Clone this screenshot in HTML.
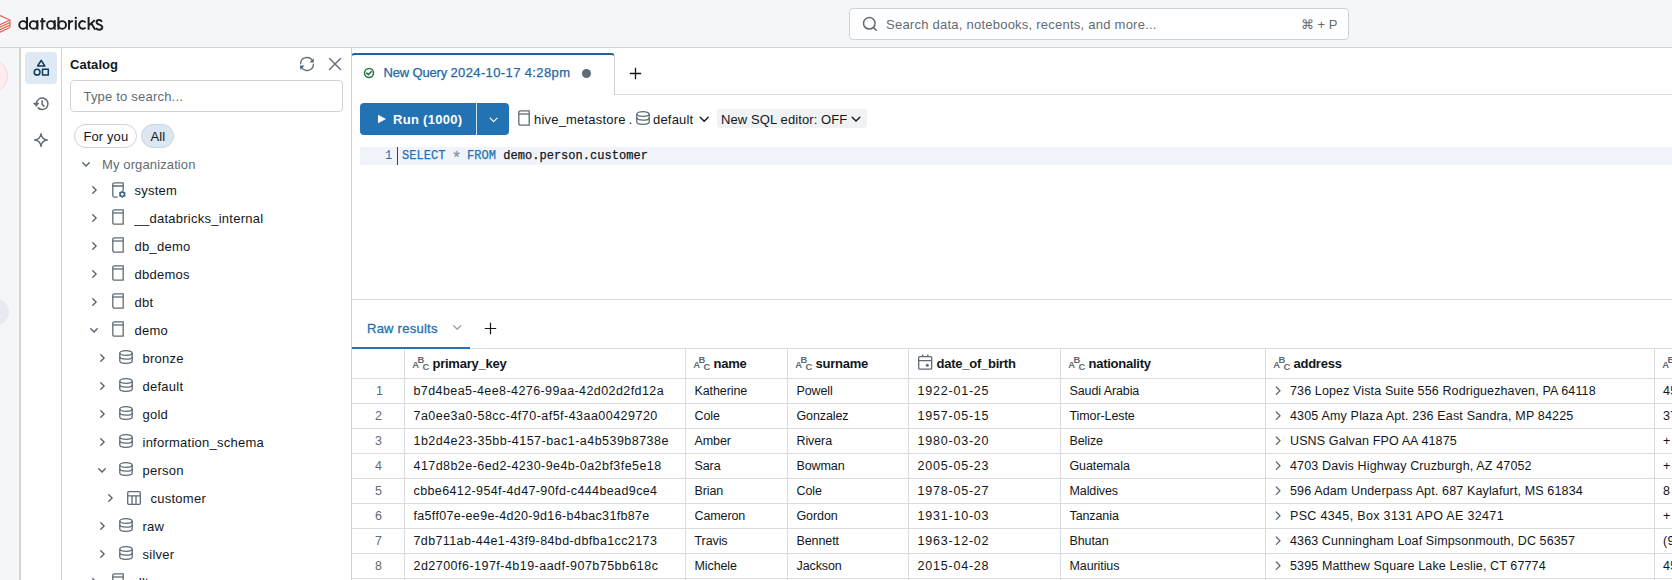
<!DOCTYPE html>
<html><head><meta charset="utf-8"><style>
html,body{margin:0;padding:0;width:1672px;height:580px;overflow:hidden;background:#fff;font-family:'Liberation Sans', sans-serif}
.t{position:absolute;white-space:nowrap}
.b{position:absolute;box-sizing:border-box}
svg.b{overflow:visible}
</style></head><body>
<div class="b" style="left:0px;top:0px;width:1672px;height:47px;background:#f5f6f7"></div><div class="b" style="left:0px;top:47px;width:1672px;height:1px;background:#cfd2d6"></div><svg class="b" style="left:-11px;top:13px" width="22" height="21" viewBox="0 0 22 21" fill="none"><g stroke="#df4a3b" stroke-width="1.15" stroke-linejoin="round" fill="none" opacity="0.85"><path d="M11 2.5 L21 7.1 L11 11.7 L1 7.1 Z"/><path d="M1 9.6 L11 14.2 L21 9.6 M1 12.1 L11 16.7 L21 12.1 M1 14.6 L11 19.2 L21 14.6 M21 7.1 V14.6"/></g></svg><svg class="b" style="left:0px;top:0px" width="110" height="40" viewBox="0 0 110 40" fill="none"><g stroke="#1b1f23" stroke-width="1.95" fill="none" stroke-linecap="butt"><ellipse cx="23.1" cy="24.95" rx="3.85" ry="3.85"/><path d="M27.0 16.9 V29.7"/><ellipse cx="33.6" cy="24.95" rx="3.8" ry="3.85"/><path d="M37.4 20.1 V29.7"/><path d="M42.3 18.1 V29.7 M40.2 21.2 H45.5"/><ellipse cx="50.9" cy="24.95" rx="3.8" ry="3.85"/><path d="M54.7 20.1 V29.7"/><path d="M58.4 16.9 V29.7"/><ellipse cx="62.2" cy="24.95" rx="3.8" ry="3.85"/><path d="M69.0 20.1 V29.7 M69.0 24.6 Q69.0 21.1 73.1 21.1"/><path d="M75.8 20.1 V29.7"/><path d="M85.6 22.3 A3.8 3.85 0 1 0 85.6 27.6"/><path d="M88.6 16.9 V29.7 M94.8 20.1 L89.4 25.0 M91.4 23.4 L95.2 29.7"/><path d="M101.9 21.9 C101.3 20.7 100.2 20.0 99.1 20.0 C97.6 20.0 96.6 20.9 96.6 22.2 C96.6 25.3 102.3 24.0 102.3 27.1 C102.3 28.8 100.9 29.8 99.2 29.8 C97.9 29.8 96.7 29.2 96.0 28.0"/></g><circle cx="75.8" cy="17.9" r="1.15" fill="#1b1f23"/></svg><div class="b" style="left:849px;top:8px;width:500px;height:32px;background:#fff;border:1px solid #cfd2d6;border-radius:4px"></div><svg class="b" style="left:862px;top:16px" width="16" height="16" viewBox="0 0 16 16" fill="none"><circle cx="7.3" cy="7.3" r="5.8" stroke="#5f6b76" stroke-width="1.5"/><path d="M11.6 11.6 L14.3 14.3" stroke="#5f6b76" stroke-width="1.5" stroke-linecap="round"/></svg><div class="t" style="left:886px;top:16.70px;font-size:13px;line-height:16px;color:#5f6b76;font-weight:400;letter-spacing:0.24px;font-family:'Liberation Sans', sans-serif;">Search data, notebooks, recents, and more...</div><div class="t" style="left:1301px;top:16.70px;font-size:13px;line-height:16px;color:#5f6b76;font-weight:400;letter-spacing:0px;font-family:'Liberation Sans', sans-serif;">&#8984; + P</div><div class="b" style="left:0px;top:48px;width:19px;height:532px;background:#f5f6f7"></div><div class="b" style="left:19px;top:48px;width:2px;height:532px;background:#d3d5d8"></div><div class="b" style="left:-26px;top:59px;width:34px;height:34px;border-radius:50%;background:#fcecee;border:1px solid #f3d6da;box-sizing:border-box"></div><div class="b" style="left:-17px;top:299px;width:26px;height:26px;border-radius:50%;background:#e6eaef"></div><div class="b" style="left:21px;top:48px;width:40px;height:532px;background:#fff"></div><div class="b" style="left:61px;top:48px;width:1px;height:532px;background:#cfd2d6"></div><div class="b" style="left:25px;top:52px;width:32px;height:32px;background:#dfe9f4;border-radius:4px"></div><svg class="b" style="left:33px;top:58px" width="17" height="19" viewBox="0 0 17 19" fill="none"><g stroke="#0e3a5c" stroke-width="1.5" stroke-linejoin="round"><path d="M8.2 2.3 L11.8 8 L4.6 8 Z"/><circle cx="4.1" cy="14.2" r="2.9"/><rect x="9.5" y="11.3" width="5.8" height="5.8"/></g></svg><svg class="b" style="left:32px;top:95px" width="18" height="17" viewBox="0 0 18 17" fill="none"><g stroke="#5f6b76" stroke-width="1.5" stroke-linecap="round" stroke-linejoin="round"><path d="M4.4 8.4 A5.8 5.8 0 1 1 6.1 12.9"/><path d="M10.2 5.7 V9.4 L12 11.1"/></g><path d="M1.5 8.1 L6.9 8.1 L4.2 11.6 Z" fill="#5f6b76" stroke="#5f6b76" stroke-width="0.6" stroke-linejoin="round"/></svg><svg class="b" style="left:33px;top:132px" width="16" height="16" viewBox="0 0 16 16" fill="none"><path d="M8 1.7 C8.5 5.9 10.1 7.5 14.3 8 C10.1 8.5 8.5 10.1 8 14.3 C7.5 10.1 5.9 8.5 1.7 8 C5.9 7.5 7.5 5.9 8 1.7 Z" stroke="#5f6b76" stroke-width="1.35" stroke-linejoin="round"/></svg><div class="b" style="left:62px;top:48px;width:289px;height:532px;background:#fff"></div><div class="b" style="left:351px;top:48px;width:1px;height:532px;background:#cfd2d6"></div><div class="t" style="left:70px;top:56.90px;font-size:13px;line-height:16px;color:#11171c;font-weight:700;letter-spacing:0.05px;font-family:'Liberation Sans', sans-serif;">Catalog</div><svg class="b" style="left:298px;top:55px" width="18" height="18" viewBox="0 0 18 18" fill="none"><g stroke="#5f6b76" stroke-width="1.3" stroke-linecap="round"><path d="M2.6 8.8 A6.3 6.3 0 0 1 14.6 6.2"/><path d="M15.4 9.2 A6.3 6.3 0 0 1 3.4 11.8"/></g><path d="M15.8 3.2 V7.6 H11.4 Z" fill="#5f6b76"/><path d="M2.2 14.8 V10.4 H6.6 Z" fill="#3a6384"/></svg><svg class="b" style="left:328px;top:57px" width="14" height="14" viewBox="0 0 14 14" fill="none"><path d="M1.5 1.5 L12.5 12.5 M12.5 1.5 L1.5 12.5" stroke="#5f6b76" stroke-width="1.4" stroke-linecap="round"/></svg><div class="b" style="left:70px;top:80px;width:273px;height:32px;background:#fff;border:1px solid #cfd2d6;border-radius:4px"></div><div class="t" style="left:83.5px;top:88.70px;font-size:13px;line-height:16px;color:#5f6b76;font-weight:400;letter-spacing:0.2px;font-family:'Liberation Sans', sans-serif;">Type to search...</div><div class="b" style="left:74px;top:124px;width:63px;height:24px;border:1px solid #cfd2d6;border-radius:12px;background:#fff"></div><div class="t" style="left:83.5px;top:129.20px;font-size:13px;line-height:16px;color:#11171c;font-weight:400;letter-spacing:0.1px;font-family:'Liberation Sans', sans-serif;">For you</div><div class="b" style="left:141px;top:124px;width:33px;height:24px;border:1px solid #c9d5e2;border-radius:12px;background:#dde7f1"></div><div class="t" style="left:150.5px;top:129.20px;font-size:13px;line-height:16px;color:#11171c;font-weight:400;letter-spacing:0.1px;font-family:'Liberation Sans', sans-serif;">All</div><svg class="b" style="left:82.2px;top:162px" width="9" height="6" viewBox="0 0 9 6" fill="none"><path d="M0.75 0.75 L4 4.1 L7.25 0.75" stroke="#5f6b76" stroke-width="1.5" stroke-linecap="round" stroke-linejoin="round"/></svg><div class="t" style="left:102px;top:157.10px;font-size:13px;line-height:16px;color:#5f6b76;font-weight:400;letter-spacing:0.12px;font-family:'Liberation Sans', sans-serif;">My organization</div><svg class="b" style="left:92px;top:186px" width="6" height="9" viewBox="0 0 6 9" fill="none"><path d="M0.75 0.75 L4.1 4 L0.75 7.25" stroke="#5f6b76" stroke-width="1.5" stroke-linecap="round" stroke-linejoin="round"/></svg><svg class="b" style="left:112px;top:182px" width="15" height="17" viewBox="0 0 15 17" fill="none"><g stroke="#5f6b76" stroke-width="1.3" stroke-linecap="round" stroke-linejoin="round"><path d="M11.2 8.3 V0.8 H2.6 Q0.8 0.8 0.8 2.6 V13.4 Q0.8 15.2 2.6 15.2 H5.2"/><path d="M0.8 4 H11.2"/></g><g transform="translate(10.3,12.3)"><circle r="2.2" stroke="#3e6481" stroke-width="1.6"/><g stroke="#3e6481" stroke-width="1.4"><path d="M0 -3.5 V-2.2" transform="rotate(0)"/><path d="M0 -3.5 V-2.2" transform="rotate(60)"/><path d="M0 -3.5 V-2.2" transform="rotate(120)"/><path d="M0 -3.5 V-2.2" transform="rotate(180)"/><path d="M0 -3.5 V-2.2" transform="rotate(240)"/><path d="M0 -3.5 V-2.2" transform="rotate(300)"/></g></g></svg><div class="t" style="left:134.5px;top:182.90px;font-size:13px;line-height:16px;color:#11171c;font-weight:400;letter-spacing:0.25px;font-family:'Liberation Sans', sans-serif;">system</div><svg class="b" style="left:92px;top:214px" width="6" height="9" viewBox="0 0 6 9" fill="none"><path d="M0.75 0.75 L4.1 4 L0.75 7.25" stroke="#5f6b76" stroke-width="1.5" stroke-linecap="round" stroke-linejoin="round"/></svg><svg class="b" style="left:112px;top:209.1px" width="12" height="16" viewBox="0 0 12 16" fill="none"><g stroke="#5f6b76" stroke-width="1.3" stroke-linejoin="round"><path d="M2.6 0.8 H11.2 V15.2 H2.6 Q0.8 15.2 0.8 13.4 V2.6 Q0.8 0.8 2.6 0.8 Z"/><path d="M0.8 4 H11.2"/></g></svg><div class="t" style="left:134.5px;top:210.90px;font-size:13px;line-height:16px;color:#11171c;font-weight:400;letter-spacing:0.25px;font-family:'Liberation Sans', sans-serif;">__databricks_internal</div><svg class="b" style="left:92px;top:242px" width="6" height="9" viewBox="0 0 6 9" fill="none"><path d="M0.75 0.75 L4.1 4 L0.75 7.25" stroke="#5f6b76" stroke-width="1.5" stroke-linecap="round" stroke-linejoin="round"/></svg><svg class="b" style="left:112px;top:237.1px" width="12" height="16" viewBox="0 0 12 16" fill="none"><g stroke="#5f6b76" stroke-width="1.3" stroke-linejoin="round"><path d="M2.6 0.8 H11.2 V15.2 H2.6 Q0.8 15.2 0.8 13.4 V2.6 Q0.8 0.8 2.6 0.8 Z"/><path d="M0.8 4 H11.2"/></g></svg><div class="t" style="left:134.5px;top:238.90px;font-size:13px;line-height:16px;color:#11171c;font-weight:400;letter-spacing:0.25px;font-family:'Liberation Sans', sans-serif;">db_demo</div><svg class="b" style="left:92px;top:270px" width="6" height="9" viewBox="0 0 6 9" fill="none"><path d="M0.75 0.75 L4.1 4 L0.75 7.25" stroke="#5f6b76" stroke-width="1.5" stroke-linecap="round" stroke-linejoin="round"/></svg><svg class="b" style="left:112px;top:265.1px" width="12" height="16" viewBox="0 0 12 16" fill="none"><g stroke="#5f6b76" stroke-width="1.3" stroke-linejoin="round"><path d="M2.6 0.8 H11.2 V15.2 H2.6 Q0.8 15.2 0.8 13.4 V2.6 Q0.8 0.8 2.6 0.8 Z"/><path d="M0.8 4 H11.2"/></g></svg><div class="t" style="left:134.5px;top:266.90px;font-size:13px;line-height:16px;color:#11171c;font-weight:400;letter-spacing:0.25px;font-family:'Liberation Sans', sans-serif;">dbdemos</div><svg class="b" style="left:92px;top:298px" width="6" height="9" viewBox="0 0 6 9" fill="none"><path d="M0.75 0.75 L4.1 4 L0.75 7.25" stroke="#5f6b76" stroke-width="1.5" stroke-linecap="round" stroke-linejoin="round"/></svg><svg class="b" style="left:112px;top:293.1px" width="12" height="16" viewBox="0 0 12 16" fill="none"><g stroke="#5f6b76" stroke-width="1.3" stroke-linejoin="round"><path d="M2.6 0.8 H11.2 V15.2 H2.6 Q0.8 15.2 0.8 13.4 V2.6 Q0.8 0.8 2.6 0.8 Z"/><path d="M0.8 4 H11.2"/></g></svg><div class="t" style="left:134.5px;top:294.90px;font-size:13px;line-height:16px;color:#11171c;font-weight:400;letter-spacing:0.25px;font-family:'Liberation Sans', sans-serif;">dbt</div><svg class="b" style="left:90px;top:328px" width="9" height="6" viewBox="0 0 9 6" fill="none"><path d="M0.75 0.75 L4 4.1 L7.25 0.75" stroke="#5f6b76" stroke-width="1.5" stroke-linecap="round" stroke-linejoin="round"/></svg><svg class="b" style="left:112px;top:321.1px" width="12" height="16" viewBox="0 0 12 16" fill="none"><g stroke="#5f6b76" stroke-width="1.3" stroke-linejoin="round"><path d="M2.6 0.8 H11.2 V15.2 H2.6 Q0.8 15.2 0.8 13.4 V2.6 Q0.8 0.8 2.6 0.8 Z"/><path d="M0.8 4 H11.2"/></g></svg><div class="t" style="left:134.5px;top:322.90px;font-size:13px;line-height:16px;color:#11171c;font-weight:400;letter-spacing:0.25px;font-family:'Liberation Sans', sans-serif;">demo</div><svg class="b" style="left:100px;top:354px" width="6" height="9" viewBox="0 0 6 9" fill="none"><path d="M0.75 0.75 L4.1 4 L0.75 7.25" stroke="#5f6b76" stroke-width="1.5" stroke-linecap="round" stroke-linejoin="round"/></svg><svg class="b" style="left:119px;top:350.4px" width="14" height="14" viewBox="0 0 14 14" fill="none"><g stroke="#5f6b76" stroke-width="1.3"><ellipse cx="7" cy="3" rx="6.2" ry="2.3"/><path d="M0.8 3 V11 Q0.8 13.3 7 13.3 Q13.2 13.3 13.2 11 V3"/><path d="M0.8 6.8 Q0.8 9.1 7 9.1 Q13.2 9.1 13.2 6.8"/></g></svg><div class="t" style="left:142.5px;top:350.90px;font-size:13px;line-height:16px;color:#11171c;font-weight:400;letter-spacing:0.25px;font-family:'Liberation Sans', sans-serif;">bronze</div><svg class="b" style="left:100px;top:382px" width="6" height="9" viewBox="0 0 6 9" fill="none"><path d="M0.75 0.75 L4.1 4 L0.75 7.25" stroke="#5f6b76" stroke-width="1.5" stroke-linecap="round" stroke-linejoin="round"/></svg><svg class="b" style="left:119px;top:378.4px" width="14" height="14" viewBox="0 0 14 14" fill="none"><g stroke="#5f6b76" stroke-width="1.3"><ellipse cx="7" cy="3" rx="6.2" ry="2.3"/><path d="M0.8 3 V11 Q0.8 13.3 7 13.3 Q13.2 13.3 13.2 11 V3"/><path d="M0.8 6.8 Q0.8 9.1 7 9.1 Q13.2 9.1 13.2 6.8"/></g></svg><div class="t" style="left:142.5px;top:378.90px;font-size:13px;line-height:16px;color:#11171c;font-weight:400;letter-spacing:0.25px;font-family:'Liberation Sans', sans-serif;">default</div><svg class="b" style="left:100px;top:410px" width="6" height="9" viewBox="0 0 6 9" fill="none"><path d="M0.75 0.75 L4.1 4 L0.75 7.25" stroke="#5f6b76" stroke-width="1.5" stroke-linecap="round" stroke-linejoin="round"/></svg><svg class="b" style="left:119px;top:406.4px" width="14" height="14" viewBox="0 0 14 14" fill="none"><g stroke="#5f6b76" stroke-width="1.3"><ellipse cx="7" cy="3" rx="6.2" ry="2.3"/><path d="M0.8 3 V11 Q0.8 13.3 7 13.3 Q13.2 13.3 13.2 11 V3"/><path d="M0.8 6.8 Q0.8 9.1 7 9.1 Q13.2 9.1 13.2 6.8"/></g></svg><div class="t" style="left:142.5px;top:406.90px;font-size:13px;line-height:16px;color:#11171c;font-weight:400;letter-spacing:0.25px;font-family:'Liberation Sans', sans-serif;">gold</div><svg class="b" style="left:100px;top:438px" width="6" height="9" viewBox="0 0 6 9" fill="none"><path d="M0.75 0.75 L4.1 4 L0.75 7.25" stroke="#5f6b76" stroke-width="1.5" stroke-linecap="round" stroke-linejoin="round"/></svg><svg class="b" style="left:119px;top:434.4px" width="14" height="14" viewBox="0 0 14 14" fill="none"><g stroke="#5f6b76" stroke-width="1.3"><ellipse cx="7" cy="3" rx="6.2" ry="2.3"/><path d="M0.8 3 V11 Q0.8 13.3 7 13.3 Q13.2 13.3 13.2 11 V3"/><path d="M0.8 6.8 Q0.8 9.1 7 9.1 Q13.2 9.1 13.2 6.8"/></g></svg><div class="t" style="left:142.5px;top:434.90px;font-size:13px;line-height:16px;color:#11171c;font-weight:400;letter-spacing:0.25px;font-family:'Liberation Sans', sans-serif;">information_schema</div><svg class="b" style="left:98px;top:468px" width="9" height="6" viewBox="0 0 9 6" fill="none"><path d="M0.75 0.75 L4 4.1 L7.25 0.75" stroke="#5f6b76" stroke-width="1.5" stroke-linecap="round" stroke-linejoin="round"/></svg><svg class="b" style="left:119px;top:462.4px" width="14" height="14" viewBox="0 0 14 14" fill="none"><g stroke="#5f6b76" stroke-width="1.3"><ellipse cx="7" cy="3" rx="6.2" ry="2.3"/><path d="M0.8 3 V11 Q0.8 13.3 7 13.3 Q13.2 13.3 13.2 11 V3"/><path d="M0.8 6.8 Q0.8 9.1 7 9.1 Q13.2 9.1 13.2 6.8"/></g></svg><div class="t" style="left:142.5px;top:462.90px;font-size:13px;line-height:16px;color:#11171c;font-weight:400;letter-spacing:0.25px;font-family:'Liberation Sans', sans-serif;">person</div><svg class="b" style="left:108px;top:494px" width="6" height="9" viewBox="0 0 6 9" fill="none"><path d="M0.75 0.75 L4.1 4 L0.75 7.25" stroke="#5f6b76" stroke-width="1.5" stroke-linecap="round" stroke-linejoin="round"/></svg><svg class="b" style="left:127px;top:491px" width="14" height="14" viewBox="0 0 14 14" fill="none"><g stroke="#5f6b76" stroke-width="1.3"><rect x="0.7" y="0.7" width="12.6" height="12.6" rx="1"/><path d="M0.7 4.8 H13.3 M5 4.8 V13.3 M9 4.8 V13.3"/></g></svg><div class="t" style="left:150.5px;top:490.90px;font-size:13px;line-height:16px;color:#11171c;font-weight:400;letter-spacing:0.25px;font-family:'Liberation Sans', sans-serif;">customer</div><svg class="b" style="left:100px;top:522px" width="6" height="9" viewBox="0 0 6 9" fill="none"><path d="M0.75 0.75 L4.1 4 L0.75 7.25" stroke="#5f6b76" stroke-width="1.5" stroke-linecap="round" stroke-linejoin="round"/></svg><svg class="b" style="left:119px;top:518.4px" width="14" height="14" viewBox="0 0 14 14" fill="none"><g stroke="#5f6b76" stroke-width="1.3"><ellipse cx="7" cy="3" rx="6.2" ry="2.3"/><path d="M0.8 3 V11 Q0.8 13.3 7 13.3 Q13.2 13.3 13.2 11 V3"/><path d="M0.8 6.8 Q0.8 9.1 7 9.1 Q13.2 9.1 13.2 6.8"/></g></svg><div class="t" style="left:142.5px;top:518.90px;font-size:13px;line-height:16px;color:#11171c;font-weight:400;letter-spacing:0.25px;font-family:'Liberation Sans', sans-serif;">raw</div><svg class="b" style="left:100px;top:550px" width="6" height="9" viewBox="0 0 6 9" fill="none"><path d="M0.75 0.75 L4.1 4 L0.75 7.25" stroke="#5f6b76" stroke-width="1.5" stroke-linecap="round" stroke-linejoin="round"/></svg><svg class="b" style="left:119px;top:546.4px" width="14" height="14" viewBox="0 0 14 14" fill="none"><g stroke="#5f6b76" stroke-width="1.3"><ellipse cx="7" cy="3" rx="6.2" ry="2.3"/><path d="M0.8 3 V11 Q0.8 13.3 7 13.3 Q13.2 13.3 13.2 11 V3"/><path d="M0.8 6.8 Q0.8 9.1 7 9.1 Q13.2 9.1 13.2 6.8"/></g></svg><div class="t" style="left:142.5px;top:546.90px;font-size:13px;line-height:16px;color:#11171c;font-weight:400;letter-spacing:0.25px;font-family:'Liberation Sans', sans-serif;">silver</div><svg class="b" style="left:92px;top:578px" width="6" height="9" viewBox="0 0 6 9" fill="none"><path d="M0.75 0.75 L4.1 4 L0.75 7.25" stroke="#5f6b76" stroke-width="1.5" stroke-linecap="round" stroke-linejoin="round"/></svg><svg class="b" style="left:112px;top:573.1px" width="12" height="16" viewBox="0 0 12 16" fill="none"><g stroke="#5f6b76" stroke-width="1.3" stroke-linejoin="round"><path d="M2.6 0.8 H11.2 V15.2 H2.6 Q0.8 15.2 0.8 13.4 V2.6 Q0.8 0.8 2.6 0.8 Z"/><path d="M0.8 4 H11.2"/></g></svg><div class="t" style="left:134.5px;top:574.90px;font-size:13px;line-height:16px;color:#11171c;font-weight:400;letter-spacing:0.25px;font-family:'Liberation Sans', sans-serif;">dlt</div><div class="b" style="left:352px;top:48px;width:1320px;height:532px;background:#fff"></div><div class="b" style="left:615px;top:94px;width:1057px;height:1px;background:#dadde0"></div><div class="b" style="left:351px;top:53px;width:264px;height:42px;background:#fff;border:1px solid #cfd2d6;border-top:2px solid #22629c;border-bottom:none;border-radius:4px 4px 0 0;box-sizing:border-box"></div><svg class="b" style="left:363px;top:67px" width="12" height="12" viewBox="0 0 12 12" fill="none"><circle cx="6" cy="6" r="4.5" stroke="#2a7a47" stroke-width="1.6"/><path d="M3.8 6.1 L5.4 7.6 L8.2 4.7" stroke="#2a7a47" stroke-width="1.6" stroke-linecap="round" stroke-linejoin="round"/></svg><div class="t" style="left:383.5px;top:65.40px;font-size:13px;line-height:16px;color:#2368a6;font-weight:400;letter-spacing:0px;font-family:'Liberation Sans', sans-serif;-webkit-text-stroke:0.25px #2368a6"><span style="letter-spacing:-0.17px">New Query </span><span style="letter-spacing:0.38px">2024-10-17 4:28pm</span></div><div class="b" style="left:582px;top:69px;width:9px;height:9px;background:#5f6b76;border-radius:50%"></div><svg class="b" style="left:629px;top:67px" width="13" height="13" viewBox="0 0 13 13" fill="none"><path d="M6.5 0.8 V12.2 M0.8 6.5 H12.2" stroke="#11171c" stroke-width="1.3"/></svg><div class="b" style="left:360px;top:103px;width:149px;height:32px;background:#2272b4;border-radius:4px"></div><div class="b" style="left:476px;top:103px;width:1px;height:32px;background:rgba(255,255,255,0.8)"></div><svg class="b" style="left:377px;top:114px" width="10" height="10" viewBox="0 0 10 10" fill="none"><path d="M1 0.7 L9 5 L1 9.3 Z" fill="#fff"/></svg><div class="t" style="left:393px;top:111.70px;font-size:13px;line-height:16px;color:#fff;font-weight:700;letter-spacing:0.3px;font-family:'Liberation Sans', sans-serif;">Run (1000)</div><svg class="b" style="left:488.5px;top:116.5px" width="10" height="7" viewBox="0 0 10 7" fill="none"><path d="M1.2 1.2 L4.6 4.6 L8 1.2" stroke="#fff" stroke-width="1.2" stroke-linecap="round" stroke-linejoin="round"/></svg><svg class="b" style="left:518px;top:110px" width="12" height="16" viewBox="0 0 12 16" fill="none"><g stroke="#5f6b76" stroke-width="1.3" stroke-linejoin="round"><path d="M2.6 0.8 H11.2 V15.2 H2.6 Q0.8 15.2 0.8 13.4 V2.6 Q0.8 0.8 2.6 0.8 Z"/><path d="M0.8 4 H11.2"/></g></svg><div class="t" style="left:534px;top:111.90px;font-size:13px;line-height:16px;color:#11171c;font-weight:400;letter-spacing:0.2px;font-family:'Liberation Sans', sans-serif;">hive_metastore</div><div class="t" style="left:628.8px;top:111.90px;font-size:13px;line-height:16px;color:#11171c;font-weight:400;letter-spacing:0px;font-family:'Liberation Sans', sans-serif;">.</div><svg class="b" style="left:636px;top:111px" width="14" height="14" viewBox="0 0 14 14" fill="none"><g stroke="#5f6b76" stroke-width="1.3"><ellipse cx="7" cy="3" rx="6.2" ry="2.3"/><path d="M0.8 3 V11 Q0.8 13.3 7 13.3 Q13.2 13.3 13.2 11 V3"/><path d="M0.8 6.8 Q0.8 9.1 7 9.1 Q13.2 9.1 13.2 6.8"/></g></svg><div class="t" style="left:653px;top:111.90px;font-size:13px;line-height:16px;color:#11171c;font-weight:400;letter-spacing:0.2px;font-family:'Liberation Sans', sans-serif;">default</div><svg class="b" style="left:699px;top:116px" width="11" height="7" viewBox="0 0 11 7" fill="none"><path d="M1.2 1.2 L5.2 5.2 L9.2 1.2" stroke="#11171c" stroke-width="1.4" stroke-linecap="round" stroke-linejoin="round"/></svg><div class="b" style="left:717px;top:109px;width:150px;height:19px;background:#f1f2f4;border-radius:4px"></div><div class="t" style="left:721px;top:111.90px;font-size:13px;line-height:16px;color:#11171c;font-weight:400;letter-spacing:0.1px;font-family:'Liberation Sans', sans-serif;">New SQL editor: OFF</div><svg class="b" style="left:851px;top:116px" width="10" height="7" viewBox="0 0 10 7" fill="none"><path d="M1.2 1.2 L5 5 L8.8 1.2" stroke="#11171c" stroke-width="1.4" stroke-linecap="round" stroke-linejoin="round"/></svg><div class="b" style="left:360px;top:147px;width:1312px;height:18px;background:#f2f4fb"></div><div class="t" style="left:385px;top:149.13px;font-size:12px;line-height:15px;color:#2272b4;font-weight:400;letter-spacing:0px;font-family:'Liberation Mono', monospace;">1</div><div class="b" style="left:397px;top:147px;width:1px;height:18px;background:#26496b"></div><div class="t" style="left:402px;top:149.13px;font-size:12px;line-height:15px;color:#11171c;font-weight:400;letter-spacing:0.03px;font-family:'Liberation Mono', monospace;-webkit-text-stroke:0.25px currentColor"><span style="color:#2272b4">SELECT</span> <span style="color:#8c98a4;display:inline-block;transform:translateY(3.6px) scale(1.35)">*</span> <span style="color:#2272b4">FROM</span> demo.person.customer</div><div class="b" style="left:352px;top:299px;width:1320px;height:1px;background:#d6d9dc"></div><div class="t" style="left:367px;top:321.10px;font-size:13px;line-height:16px;color:#2272b4;font-weight:400;letter-spacing:0.25px;font-family:'Liberation Sans', sans-serif;-webkit-text-stroke:0.3px #2272b4">Raw results</div><svg class="b" style="left:452.5px;top:325.3px" width="9" height="6" viewBox="0 0 9 6" fill="none"><path d="M0.7 0.7 L4.2 4.3 L7.7 0.7" stroke="#9aa3ab" stroke-width="1.3" stroke-linecap="round" stroke-linejoin="round"/></svg><svg class="b" style="left:484px;top:322px" width="13" height="13" viewBox="0 0 13 13" fill="none"><path d="M6.5 0.8 V12.2 M0.8 6.5 H12.2" stroke="#11171c" stroke-width="1.2"/></svg><div class="b" style="left:352px;top:348px;width:1320px;height:1px;background:#d9dce0"></div><div class="b" style="left:352px;top:347px;width:118px;height:2px;background:#2272b4"></div><div class="b" style="left:352px;top:378px;width:1320px;height:1px;background:#d9dce0"></div><div class="b" style="left:352px;top:403px;width:1320px;height:1px;background:#d9dce0"></div><div class="b" style="left:352px;top:428px;width:1320px;height:1px;background:#d9dce0"></div><div class="b" style="left:352px;top:453px;width:1320px;height:1px;background:#d9dce0"></div><div class="b" style="left:352px;top:478px;width:1320px;height:1px;background:#d9dce0"></div><div class="b" style="left:352px;top:503px;width:1320px;height:1px;background:#d9dce0"></div><div class="b" style="left:352px;top:528px;width:1320px;height:1px;background:#d9dce0"></div><div class="b" style="left:352px;top:553px;width:1320px;height:1px;background:#d9dce0"></div><div class="b" style="left:352px;top:578px;width:1320px;height:1px;background:#d9dce0"></div><div class="b" style="left:404px;top:349px;width:1px;height:231px;background:#d9dce0"></div><div class="b" style="left:685px;top:349px;width:1px;height:231px;background:#d9dce0"></div><div class="b" style="left:787px;top:349px;width:1px;height:231px;background:#d9dce0"></div><div class="b" style="left:908px;top:349px;width:1px;height:231px;background:#d9dce0"></div><div class="b" style="left:1060px;top:349px;width:1px;height:231px;background:#d9dce0"></div><div class="b" style="left:1265px;top:349px;width:1px;height:231px;background:#d9dce0"></div><div class="b" style="left:1654px;top:349px;width:1px;height:231px;background:#d9dce0"></div><svg class="b" style="left:412px;top:356px" width="16" height="14" viewBox="0 0 16 14" fill="none"><g fill="#5f6b76" font-family="Liberation Sans" font-weight="700" font-size="9.4"><text x="0.2" y="11.8">A</text><text x="5.6" y="6.7">B</text><text x="10.4" y="13.8">C</text></g></svg><div class="t" style="left:432.5px;top:356.00px;font-size:13px;line-height:16px;color:#11171c;font-weight:700;letter-spacing:-0.25px;font-family:'Liberation Sans', sans-serif;">primary_key</div><svg class="b" style="left:693px;top:356px" width="16" height="14" viewBox="0 0 16 14" fill="none"><g fill="#5f6b76" font-family="Liberation Sans" font-weight="700" font-size="9.4"><text x="0.2" y="11.8">A</text><text x="5.6" y="6.7">B</text><text x="10.4" y="13.8">C</text></g></svg><div class="t" style="left:713.5px;top:356.00px;font-size:13px;line-height:16px;color:#11171c;font-weight:700;letter-spacing:-0.25px;font-family:'Liberation Sans', sans-serif;">name</div><svg class="b" style="left:795px;top:356px" width="16" height="14" viewBox="0 0 16 14" fill="none"><g fill="#5f6b76" font-family="Liberation Sans" font-weight="700" font-size="9.4"><text x="0.2" y="11.8">A</text><text x="5.6" y="6.7">B</text><text x="10.4" y="13.8">C</text></g></svg><div class="t" style="left:815.5px;top:356.00px;font-size:13px;line-height:16px;color:#11171c;font-weight:700;letter-spacing:-0.25px;font-family:'Liberation Sans', sans-serif;">surname</div><svg class="b" style="left:918px;top:354px" width="15" height="16" viewBox="0 0 15 16" fill="none"><g stroke="#5f6b76" stroke-width="1.3"><rect x="0.7" y="2.6" width="13" height="12.6" rx="1"/><path d="M0.7 6.6 H13.7 M4.6 0.5 V3 M9.8 0.5 V3"/></g><circle cx="9.3" cy="11.2" r="1.5" fill="#5f6b76"/></svg><div class="t" style="left:936.5px;top:356.00px;font-size:13px;line-height:16px;color:#11171c;font-weight:700;letter-spacing:-0.25px;font-family:'Liberation Sans', sans-serif;">date_of_birth</div><svg class="b" style="left:1068px;top:356px" width="16" height="14" viewBox="0 0 16 14" fill="none"><g fill="#5f6b76" font-family="Liberation Sans" font-weight="700" font-size="9.4"><text x="0.2" y="11.8">A</text><text x="5.6" y="6.7">B</text><text x="10.4" y="13.8">C</text></g></svg><div class="t" style="left:1088.5px;top:356.00px;font-size:13px;line-height:16px;color:#11171c;font-weight:700;letter-spacing:-0.25px;font-family:'Liberation Sans', sans-serif;">nationality</div><svg class="b" style="left:1273px;top:356px" width="16" height="14" viewBox="0 0 16 14" fill="none"><g fill="#5f6b76" font-family="Liberation Sans" font-weight="700" font-size="9.4"><text x="0.2" y="11.8">A</text><text x="5.6" y="6.7">B</text><text x="10.4" y="13.8">C</text></g></svg><div class="t" style="left:1293.5px;top:356.00px;font-size:13px;line-height:16px;color:#11171c;font-weight:700;letter-spacing:-0.25px;font-family:'Liberation Sans', sans-serif;">address</div><svg class="b" style="left:1662px;top:356px" width="16" height="14" viewBox="0 0 16 14" fill="none"><g fill="#5f6b76" font-family="Liberation Sans" font-weight="700" font-size="9.4"><text x="0.2" y="11.8">A</text><text x="5.6" y="6.7">B</text><text x="10.4" y="13.8">C</text></g></svg><div class="t" style="left:1682.5px;top:356.00px;font-size:13px;line-height:16px;color:#11171c;font-weight:700;letter-spacing:-0.25px;font-family:'Liberation Sans', sans-serif;">phone</div><div class="t" style="left:374.5px;top:382.57px;font-size:12.5px;line-height:16px;color:#5f6b76;font-weight:400;letter-spacing:0px;font-family:'Liberation Sans', sans-serif;width:10px;text-align:center">1</div><div class="t" style="left:413.5px;top:382.57px;font-size:12.5px;line-height:16px;color:#11171c;font-weight:400;letter-spacing:0.414px;font-family:'Liberation Sans', sans-serif;">b7d4bea5-4ee8-4276-99aa-42d02d2fd12a</div><div class="t" style="left:694.5px;top:382.57px;font-size:12.5px;line-height:16px;color:#11171c;font-weight:400;letter-spacing:-0.1px;font-family:'Liberation Sans', sans-serif;">Katherine</div><div class="t" style="left:796.5px;top:382.57px;font-size:12.5px;line-height:16px;color:#11171c;font-weight:400;letter-spacing:-0.1px;font-family:'Liberation Sans', sans-serif;">Powell</div><div class="t" style="left:917.5px;top:382.57px;font-size:12.5px;line-height:16px;color:#11171c;font-weight:400;letter-spacing:0.789px;font-family:'Liberation Sans', sans-serif;">1922-01-25</div><div class="t" style="left:1069.5px;top:382.57px;font-size:12.5px;line-height:16px;color:#11171c;font-weight:400;letter-spacing:-0.1px;font-family:'Liberation Sans', sans-serif;">Saudi Arabia</div><svg class="b" style="left:1275px;top:385.7px" width="7" height="10" viewBox="0 0 7 10" fill="none"><path d="M1.3 1 L5 4.7 L1.3 8.4" stroke="#5f6b76" stroke-width="1.3" stroke-linecap="round" stroke-linejoin="round"/></svg><div class="t" style="left:1290px;top:382.57px;font-size:12.5px;line-height:16px;color:#11171c;font-weight:400;letter-spacing:0.124px;font-family:'Liberation Sans', sans-serif;">736 Lopez Vista Suite 556 Rodriguezhaven, PA 64118</div><div class="t" style="left:1663px;top:382.57px;font-size:12.5px;line-height:16px;color:#11171c;font-weight:400;letter-spacing:0.3px;font-family:'Liberation Sans', sans-serif;">45</div><div class="t" style="left:373.5px;top:407.57px;font-size:12.5px;line-height:16px;color:#5f6b76;font-weight:400;letter-spacing:0px;font-family:'Liberation Sans', sans-serif;width:10px;text-align:center">2</div><div class="t" style="left:413.5px;top:407.57px;font-size:12.5px;line-height:16px;color:#11171c;font-weight:400;letter-spacing:0.471px;font-family:'Liberation Sans', sans-serif;">7a0ee3a0-58cc-4f70-af5f-43aa00429720</div><div class="t" style="left:694.5px;top:407.57px;font-size:12.5px;line-height:16px;color:#11171c;font-weight:400;letter-spacing:-0.1px;font-family:'Liberation Sans', sans-serif;">Cole</div><div class="t" style="left:796.5px;top:407.57px;font-size:12.5px;line-height:16px;color:#11171c;font-weight:400;letter-spacing:-0.1px;font-family:'Liberation Sans', sans-serif;">Gonzalez</div><div class="t" style="left:917.5px;top:407.57px;font-size:12.5px;line-height:16px;color:#11171c;font-weight:400;letter-spacing:0.789px;font-family:'Liberation Sans', sans-serif;">1957-05-15</div><div class="t" style="left:1069.5px;top:407.57px;font-size:12.5px;line-height:16px;color:#11171c;font-weight:400;letter-spacing:-0.1px;font-family:'Liberation Sans', sans-serif;">Timor-Leste</div><svg class="b" style="left:1275px;top:410.7px" width="7" height="10" viewBox="0 0 7 10" fill="none"><path d="M1.3 1 L5 4.7 L1.3 8.4" stroke="#5f6b76" stroke-width="1.3" stroke-linecap="round" stroke-linejoin="round"/></svg><div class="t" style="left:1290px;top:407.57px;font-size:12.5px;line-height:16px;color:#11171c;font-weight:400;letter-spacing:0.173px;font-family:'Liberation Sans', sans-serif;">4305 Amy Plaza Apt. 236 East Sandra, MP 84225</div><div class="t" style="left:1663px;top:407.57px;font-size:12.5px;line-height:16px;color:#11171c;font-weight:400;letter-spacing:0.3px;font-family:'Liberation Sans', sans-serif;">37</div><div class="t" style="left:373.5px;top:432.57px;font-size:12.5px;line-height:16px;color:#5f6b76;font-weight:400;letter-spacing:0px;font-family:'Liberation Sans', sans-serif;width:10px;text-align:center">3</div><div class="t" style="left:413.5px;top:432.57px;font-size:12.5px;line-height:16px;color:#11171c;font-weight:400;letter-spacing:0.471px;font-family:'Liberation Sans', sans-serif;">1b2d4e23-35bb-4157-bac1-a4b539b8738e</div><div class="t" style="left:694.5px;top:432.57px;font-size:12.5px;line-height:16px;color:#11171c;font-weight:400;letter-spacing:-0.1px;font-family:'Liberation Sans', sans-serif;">Amber</div><div class="t" style="left:796.5px;top:432.57px;font-size:12.5px;line-height:16px;color:#11171c;font-weight:400;letter-spacing:-0.1px;font-family:'Liberation Sans', sans-serif;">Rivera</div><div class="t" style="left:917.5px;top:432.57px;font-size:12.5px;line-height:16px;color:#11171c;font-weight:400;letter-spacing:0.789px;font-family:'Liberation Sans', sans-serif;">1980-03-20</div><div class="t" style="left:1069.5px;top:432.57px;font-size:12.5px;line-height:16px;color:#11171c;font-weight:400;letter-spacing:-0.1px;font-family:'Liberation Sans', sans-serif;">Belize</div><svg class="b" style="left:1275px;top:435.7px" width="7" height="10" viewBox="0 0 7 10" fill="none"><path d="M1.3 1 L5 4.7 L1.3 8.4" stroke="#5f6b76" stroke-width="1.3" stroke-linecap="round" stroke-linejoin="round"/></svg><div class="t" style="left:1290px;top:432.57px;font-size:12.5px;line-height:16px;color:#11171c;font-weight:400;letter-spacing:0.117px;font-family:'Liberation Sans', sans-serif;">USNS Galvan FPO AA 41875</div><div class="t" style="left:1663px;top:432.57px;font-size:12.5px;line-height:16px;color:#11171c;font-weight:400;letter-spacing:0.3px;font-family:'Liberation Sans', sans-serif;">+</div><div class="t" style="left:373.5px;top:457.57px;font-size:12.5px;line-height:16px;color:#5f6b76;font-weight:400;letter-spacing:0px;font-family:'Liberation Sans', sans-serif;width:10px;text-align:center">4</div><div class="t" style="left:413.5px;top:457.57px;font-size:12.5px;line-height:16px;color:#11171c;font-weight:400;letter-spacing:0.443px;font-family:'Liberation Sans', sans-serif;">417d8b2e-6ed2-4230-9e4b-0a2bf3fe5e18</div><div class="t" style="left:694.5px;top:457.57px;font-size:12.5px;line-height:16px;color:#11171c;font-weight:400;letter-spacing:-0.1px;font-family:'Liberation Sans', sans-serif;">Sara</div><div class="t" style="left:796.5px;top:457.57px;font-size:12.5px;line-height:16px;color:#11171c;font-weight:400;letter-spacing:-0.1px;font-family:'Liberation Sans', sans-serif;">Bowman</div><div class="t" style="left:917.5px;top:457.57px;font-size:12.5px;line-height:16px;color:#11171c;font-weight:400;letter-spacing:0.789px;font-family:'Liberation Sans', sans-serif;">2005-05-23</div><div class="t" style="left:1069.5px;top:457.57px;font-size:12.5px;line-height:16px;color:#11171c;font-weight:400;letter-spacing:-0.1px;font-family:'Liberation Sans', sans-serif;">Guatemala</div><svg class="b" style="left:1275px;top:460.7px" width="7" height="10" viewBox="0 0 7 10" fill="none"><path d="M1.3 1 L5 4.7 L1.3 8.4" stroke="#5f6b76" stroke-width="1.3" stroke-linecap="round" stroke-linejoin="round"/></svg><div class="t" style="left:1290px;top:457.57px;font-size:12.5px;line-height:16px;color:#11171c;font-weight:400;letter-spacing:0.143px;font-family:'Liberation Sans', sans-serif;">4703 Davis Highway Cruzburgh, AZ 47052</div><div class="t" style="left:1663px;top:457.57px;font-size:12.5px;line-height:16px;color:#11171c;font-weight:400;letter-spacing:0.3px;font-family:'Liberation Sans', sans-serif;">+</div><div class="t" style="left:373.5px;top:482.57px;font-size:12.5px;line-height:16px;color:#5f6b76;font-weight:400;letter-spacing:0px;font-family:'Liberation Sans', sans-serif;width:10px;text-align:center">5</div><div class="t" style="left:413.5px;top:482.57px;font-size:12.5px;line-height:16px;color:#11171c;font-weight:400;letter-spacing:0.386px;font-family:'Liberation Sans', sans-serif;">cbbe6412-954f-4d47-90fd-c444bead9ce4</div><div class="t" style="left:694.5px;top:482.57px;font-size:12.5px;line-height:16px;color:#11171c;font-weight:400;letter-spacing:-0.1px;font-family:'Liberation Sans', sans-serif;">Brian</div><div class="t" style="left:796.5px;top:482.57px;font-size:12.5px;line-height:16px;color:#11171c;font-weight:400;letter-spacing:-0.1px;font-family:'Liberation Sans', sans-serif;">Cole</div><div class="t" style="left:917.5px;top:482.57px;font-size:12.5px;line-height:16px;color:#11171c;font-weight:400;letter-spacing:0.789px;font-family:'Liberation Sans', sans-serif;">1978-05-27</div><div class="t" style="left:1069.5px;top:482.57px;font-size:12.5px;line-height:16px;color:#11171c;font-weight:400;letter-spacing:-0.1px;font-family:'Liberation Sans', sans-serif;">Maldives</div><svg class="b" style="left:1275px;top:485.7px" width="7" height="10" viewBox="0 0 7 10" fill="none"><path d="M1.3 1 L5 4.7 L1.3 8.4" stroke="#5f6b76" stroke-width="1.3" stroke-linecap="round" stroke-linejoin="round"/></svg><div class="t" style="left:1290px;top:482.57px;font-size:12.5px;line-height:16px;color:#11171c;font-weight:400;letter-spacing:0.139px;font-family:'Liberation Sans', sans-serif;">596 Adam Underpass Apt. 687 Kaylafurt, MS 61834</div><div class="t" style="left:1663px;top:482.57px;font-size:12.5px;line-height:16px;color:#11171c;font-weight:400;letter-spacing:0.3px;font-family:'Liberation Sans', sans-serif;">8</div><div class="t" style="left:373.5px;top:507.57px;font-size:12.5px;line-height:16px;color:#5f6b76;font-weight:400;letter-spacing:0px;font-family:'Liberation Sans', sans-serif;width:10px;text-align:center">6</div><div class="t" style="left:413.5px;top:507.57px;font-size:12.5px;line-height:16px;color:#11171c;font-weight:400;letter-spacing:0.329px;font-family:'Liberation Sans', sans-serif;">fa5ff07e-ee9e-4d20-9d16-b4bac31fb87e</div><div class="t" style="left:694.5px;top:507.57px;font-size:12.5px;line-height:16px;color:#11171c;font-weight:400;letter-spacing:-0.1px;font-family:'Liberation Sans', sans-serif;">Cameron</div><div class="t" style="left:796.5px;top:507.57px;font-size:12.5px;line-height:16px;color:#11171c;font-weight:400;letter-spacing:-0.1px;font-family:'Liberation Sans', sans-serif;">Gordon</div><div class="t" style="left:917.5px;top:507.57px;font-size:12.5px;line-height:16px;color:#11171c;font-weight:400;letter-spacing:0.789px;font-family:'Liberation Sans', sans-serif;">1931-10-03</div><div class="t" style="left:1069.5px;top:507.57px;font-size:12.5px;line-height:16px;color:#11171c;font-weight:400;letter-spacing:-0.1px;font-family:'Liberation Sans', sans-serif;">Tanzania</div><svg class="b" style="left:1275px;top:510.70000000000005px" width="7" height="10" viewBox="0 0 7 10" fill="none"><path d="M1.3 1 L5 4.7 L1.3 8.4" stroke="#5f6b76" stroke-width="1.3" stroke-linecap="round" stroke-linejoin="round"/></svg><div class="t" style="left:1290px;top:507.57px;font-size:12.5px;line-height:16px;color:#11171c;font-weight:400;letter-spacing:0.333px;font-family:'Liberation Sans', sans-serif;">PSC 4345, Box 3131 APO AE 32471</div><div class="t" style="left:1663px;top:507.57px;font-size:12.5px;line-height:16px;color:#11171c;font-weight:400;letter-spacing:0.3px;font-family:'Liberation Sans', sans-serif;">+</div><div class="t" style="left:373.5px;top:532.57px;font-size:12.5px;line-height:16px;color:#5f6b76;font-weight:400;letter-spacing:0px;font-family:'Liberation Sans', sans-serif;width:10px;text-align:center">7</div><div class="t" style="left:413.5px;top:532.57px;font-size:12.5px;line-height:16px;color:#11171c;font-weight:400;letter-spacing:0.386px;font-family:'Liberation Sans', sans-serif;">7db711ab-44e1-43f9-84bd-dbfba1cc2173</div><div class="t" style="left:694.5px;top:532.57px;font-size:12.5px;line-height:16px;color:#11171c;font-weight:400;letter-spacing:-0.1px;font-family:'Liberation Sans', sans-serif;">Travis</div><div class="t" style="left:796.5px;top:532.57px;font-size:12.5px;line-height:16px;color:#11171c;font-weight:400;letter-spacing:-0.1px;font-family:'Liberation Sans', sans-serif;">Bennett</div><div class="t" style="left:917.5px;top:532.57px;font-size:12.5px;line-height:16px;color:#11171c;font-weight:400;letter-spacing:0.789px;font-family:'Liberation Sans', sans-serif;">1963-12-02</div><div class="t" style="left:1069.5px;top:532.57px;font-size:12.5px;line-height:16px;color:#11171c;font-weight:400;letter-spacing:-0.1px;font-family:'Liberation Sans', sans-serif;">Bhutan</div><svg class="b" style="left:1275px;top:535.7px" width="7" height="10" viewBox="0 0 7 10" fill="none"><path d="M1.3 1 L5 4.7 L1.3 8.4" stroke="#5f6b76" stroke-width="1.3" stroke-linecap="round" stroke-linejoin="round"/></svg><div class="t" style="left:1290px;top:532.57px;font-size:12.5px;line-height:16px;color:#11171c;font-weight:400;letter-spacing:0.114px;font-family:'Liberation Sans', sans-serif;">4363 Cunningham Loaf Simpsonmouth, DC 56357</div><div class="t" style="left:1663px;top:532.57px;font-size:12.5px;line-height:16px;color:#11171c;font-weight:400;letter-spacing:0.3px;font-family:'Liberation Sans', sans-serif;">(9</div><div class="t" style="left:373.5px;top:557.57px;font-size:12.5px;line-height:16px;color:#5f6b76;font-weight:400;letter-spacing:0px;font-family:'Liberation Sans', sans-serif;width:10px;text-align:center">8</div><div class="t" style="left:413.5px;top:557.57px;font-size:12.5px;line-height:16px;color:#11171c;font-weight:400;letter-spacing:0.471px;font-family:'Liberation Sans', sans-serif;">2d2700f6-197f-4b19-aadf-907b75bb618c</div><div class="t" style="left:694.5px;top:557.57px;font-size:12.5px;line-height:16px;color:#11171c;font-weight:400;letter-spacing:-0.1px;font-family:'Liberation Sans', sans-serif;">Michele</div><div class="t" style="left:796.5px;top:557.57px;font-size:12.5px;line-height:16px;color:#11171c;font-weight:400;letter-spacing:-0.1px;font-family:'Liberation Sans', sans-serif;">Jackson</div><div class="t" style="left:917.5px;top:557.57px;font-size:12.5px;line-height:16px;color:#11171c;font-weight:400;letter-spacing:0.789px;font-family:'Liberation Sans', sans-serif;">2015-04-28</div><div class="t" style="left:1069.5px;top:557.57px;font-size:12.5px;line-height:16px;color:#11171c;font-weight:400;letter-spacing:-0.1px;font-family:'Liberation Sans', sans-serif;">Mauritius</div><svg class="b" style="left:1275px;top:560.7px" width="7" height="10" viewBox="0 0 7 10" fill="none"><path d="M1.3 1 L5 4.7 L1.3 8.4" stroke="#5f6b76" stroke-width="1.3" stroke-linecap="round" stroke-linejoin="round"/></svg><div class="t" style="left:1290px;top:557.57px;font-size:12.5px;line-height:16px;color:#11171c;font-weight:400;letter-spacing:0.125px;font-family:'Liberation Sans', sans-serif;">5395 Matthew Square Lake Leslie, CT 67774</div><div class="t" style="left:1663px;top:557.57px;font-size:12.5px;line-height:16px;color:#11171c;font-weight:400;letter-spacing:0.3px;font-family:'Liberation Sans', sans-serif;">45</div>
</body></html>
